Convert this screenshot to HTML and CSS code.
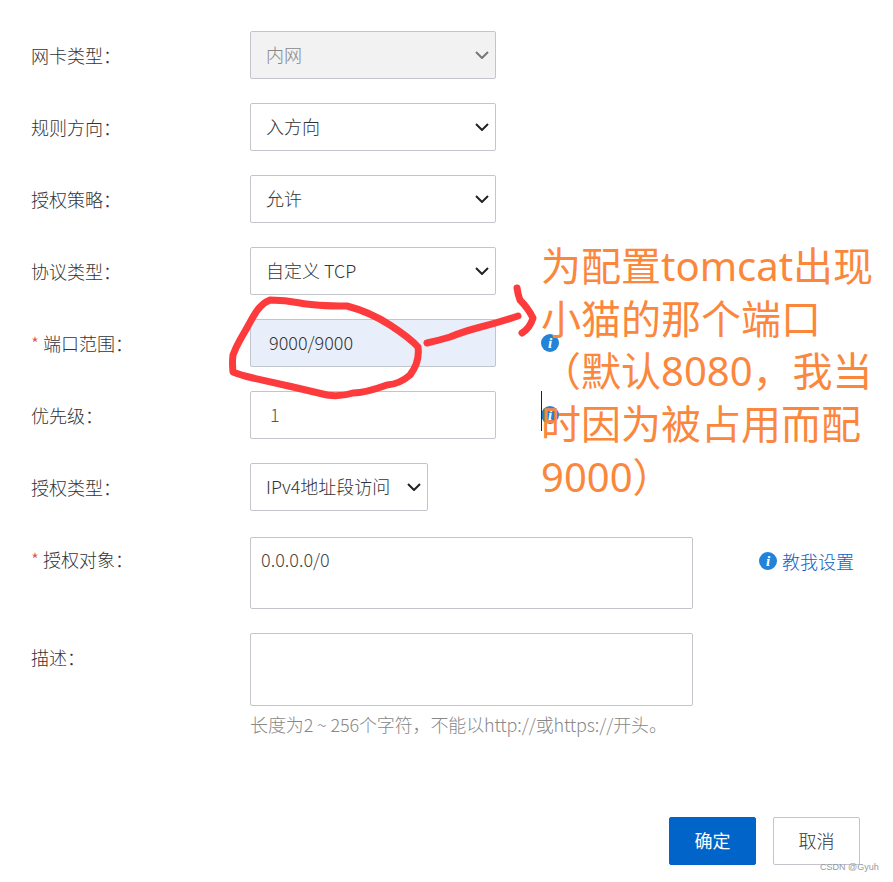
FILE: index.html
```html
<!DOCTYPE html>
<html lang="zh-CN">
<head>
  <meta charset="UTF-8" />
  <title>添加安全组规则</title>
  <link rel="stylesheet" href="styles.css">
</head>
<body>

  <main class="page">
    <form class="rule-form">
      <div class="row">
        <label class="label">网卡类型：</label>
        <div class="field select wide disabled">
          <span>内网</span>
          <svg class="chevron" viewBox="0 0 14 8"><path d="M1 1l6 6 6-6"/></svg>
        </div>
      </div>

      <div class="row">
        <label class="label">规则方向：</label>
        <div class="field select wide">
          <span>入方向</span>
          <svg class="chevron" viewBox="0 0 14 8"><path d="M1 1l6 6 6-6"/></svg>
        </div>
      </div>

      <div class="row">
        <label class="label">授权策略：</label>
        <div class="field select wide">
          <span>允许</span>
          <svg class="chevron" viewBox="0 0 14 8"><path d="M1 1l6 6 6-6"/></svg>
        </div>
      </div>

      <div class="row">
        <label class="label">协议类型：</label>
        <div class="field select wide">
          <span>自定义 TCP</span>
          <svg class="chevron" viewBox="0 0 14 8"><path d="M1 1l6 6 6-6"/></svg>
        </div>
      </div>

      <div class="row">
        <label class="label"><em class="req">*</em> 端口范围：</label>
        <div class="field wide autofilled">9000/9000</div>
        <span class="info"><i>i</i></span>
      </div>

      <div class="row">
        <label class="label">优先级：</label>
        <div class="field wide plain">1</div>
        <span class="info"><i>i</i></span>
      </div>

      <div class="row">
        <label class="label">授权类型：</label>
        <div class="field select narrow">
          <span>IPv4地址段访问</span>
          <svg class="chevron" viewBox="0 0 14 8"><path d="M1 1l6 6 6-6"/></svg>
        </div>
      </div>

      <div class="row row-area first-area">
        <label class="label"><em class="req">*</em> 授权对象：</label>
        <div class="area area-object">0.0.0.0/0</div>
        <a class="help"><span class="info"><i>i</i></span>教我设置</a>
      </div>

      <div class="row row-area second-area">
        <label class="label">描述：</label>
        <div class="area-wrap">
          <div class="area area-desc"></div>
          <p class="hint">长度为2 ~ 256个字符，不能以http://或https://开头。</p>
        </div>
      </div>

      <div class="actions">
        <button type="button" class="btn primary">确定</button>
        <button type="button" class="btn">取消</button>
      </div>
    </form>

    <!-- 手写标注 -->
    <svg class="scribble" viewBox="0 0 893 882">
      <path d="M270 300 Q285 300 300 303 T347 306 Q370 312 390 325 T418 347 Q420 362 410 375 Q400 384 387 385 Q365 393 353 393 Q340 397 327 395 Q310 391 293 387 L253 378 Q240 375 233 372 Q232 362 233 355 Q236 347 240 340 Q247 328 253 317 Q260 304 270 300Z"/>
      <path d="M427 343 Q440 340 450 337 Q465 331 477 328 Q500 322 518 316"/>
      <path d="M517 288 Q518 295 520 300 Q528 308 533 318 Q530 328 522 333"/>
    </svg>

    <div class="cursor"></div>

    <p class="note">为配置tomcat出现小猫的那个端口（默认8080，我当时因为被占用而配9000）</p>

    <span class="watermark">CSDN @Gyuh</span>
  </main>

</body>
</html>
```

FILE: styles.css
```css
* {
  box-sizing: border-box;
}

body {
  margin: 0;
  background: #fff;
  color: #333;
  font-family: "Noto Sans CJK SC", "Open Sans", sans-serif;
  font-size: 18px;
  font-weight: 300;
}

.page {
  position: relative;
  width: 893px;
  height: 882px;
  overflow: hidden;
}

.rule-form {
  display: flex;
  flex-direction: column;
  gap: 24px;
  padding: 31px 0 0 31px;
}

.row {
  display: flex;
  align-items: center;
  height: 48px;
}

.label {
  width: 219px;
  flex: none;
  padding-bottom: 1px;
  color: #333;
}

.req {
  color: #e5403a;
  font-style: normal;
}

.field {
  display: flex;
  align-items: center;
  justify-content: space-between;
  height: 48px;
  padding: 0 15px 2px;
  border: 1px solid #c2c6cc;
  border-radius: 2px;
}

.wide {
  width: 246px;
}

.narrow {
  width: 178px;
}

.chevron {
  width: 14px;
  height: 8px;
  margin: 2px -9px 0 0;
  fill: none;
  stroke: #222;
  stroke-width: 2;
}

.disabled {
  background: #f2f2f2;
  color: #888;
}

.disabled .chevron {
  stroke: #777;
}

.autofilled {
  justify-content: flex-start;
  padding-left: 18px;
  background: #e8effb;
}

.plain {
  justify-content: flex-start;
  padding-left: 19px;
  color: #555;
}

.info {
  display: inline-flex;
  align-items: center;
  justify-content: center;
  flex: none;
  width: 18px;
  height: 18px;
  margin-left: 45px;
  border-radius: 50%;
  background: #2283d8;
  color: #fff;
  font-family: "Liberation Serif", serif;
  font-size: 15px;
  font-weight: 700;
  line-height: 1;
}

.row-area {
  align-items: flex-start;
  height: auto;
}

.first-area {
  margin-top: 2px;
}

.row-area .label {
  padding: 9px 0 0;
}

.second-area .label {
  padding-top: 11px;
}

.area {
  width: 443px;
  padding: 8px 10px;
  border: 1px solid #c2c6cc;
  border-radius: 2px;
  line-height: 26px;
}

.area-object {
  height: 72px;
  color: #444;
}

.area-desc {
  height: 73px;
}

.help {
  display: flex;
  align-items: center;
  gap: 5px;
  margin: 11px 0 0 66px;
  color: #0a62c4;
}

.help .info {
  margin-left: 0;
}

.hint {
  margin: 5px 0 0;
  color: #888;
  letter-spacing: -0.12px;
}

.actions {
  display: flex;
  gap: 17px;
  margin: 56px 0 0 638px;
}

.btn {
  width: 87px;
  height: 48px;
  padding-bottom: 3px;
  border: 1px solid #c2c6cc;
  border-radius: 2px;
  background: #fff;
  color: #333;
  font-family: inherit;
  font-size: 18px;
  font-weight: 300;
}

.primary {
  border-color: #0064c8;
  background: #0064c8;
  color: #fff;
  font-weight: 400;
}

.scribble {
  position: absolute;
  top: 0;
  left: 0;
  width: 893px;
  height: 882px;
  fill: none;
  stroke: #fd3a3c;
  stroke-width: 7;
  stroke-linecap: round;
  stroke-linejoin: round;
}

.cursor {
  position: absolute;
  left: 541px;
  top: 391px;
  width: 1px;
  height: 40px;
  background: #222;
}

.note {
  position: absolute;
  left: 541px;
  top: 240px;
  width: 340px;
  margin: 0;
  color: #fb873c;
  font-family: "Noto Sans", "Noto Sans CJK SC", sans-serif;
  font-size: 40px;
  font-weight: 400;
  line-height: 52.7px;
}

.watermark {
  position: absolute;
  left: 820px;
  top: 862px;
  color: #999;
  font-family: "Liberation Sans", sans-serif;
  font-size: 9px;
}
```
